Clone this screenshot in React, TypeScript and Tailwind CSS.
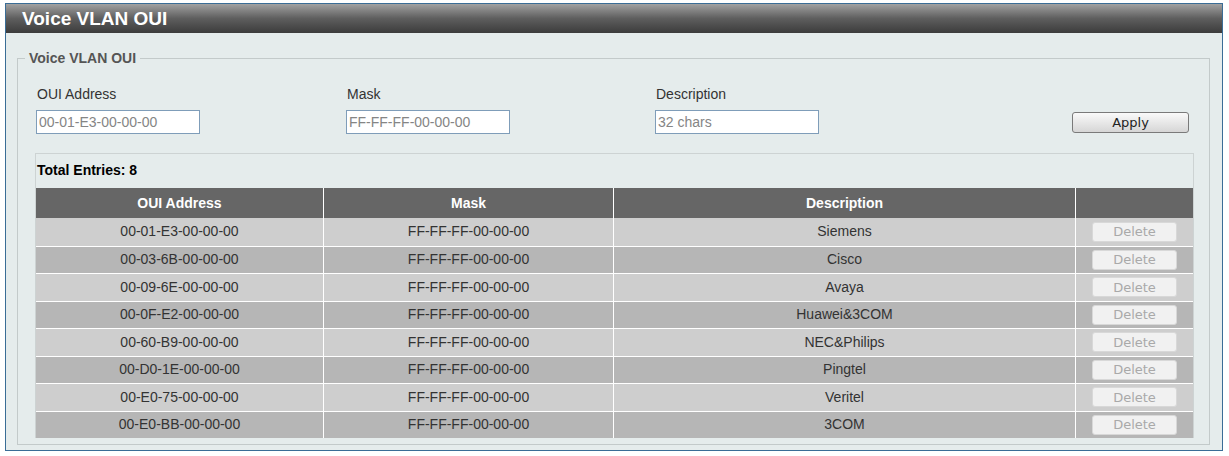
import React from "react";

const entries = [
  { oui: "00-01-E3-00-00-00", desc: "Siemens" },
  { oui: "00-03-6B-00-00-00", desc: "Cisco" },
  { oui: "00-09-6E-00-00-00", desc: "Avaya" },
  { oui: "00-0F-E2-00-00-00", desc: "Huawei&3COM" },
  { oui: "00-60-B9-00-00-00", desc: "NEC&Philips" },
  { oui: "00-D0-1E-00-00-00", desc: "Pingtel" },
  { oui: "00-E0-75-00-00-00", desc: "Veritel" },
  { oui: "00-E0-BB-00-00-00", desc: "3COM" },
];

function Field({ label, value, width }: { label: string; value: string; width: string }) {
  return (
    <div className={`${width} flex flex-col`}>
      <span className="ml-[1px] text-[14px] leading-[16px] text-[#333]">{label}</span>
      <input
        readOnly
        defaultValue={value}
        className="mt-[8px] h-[24px] w-[164px] border border-[#7f9db9] bg-white px-[2px] text-[14px] text-[#858585] outline-none [font-family:'Liberation_Sans',Arial,sans-serif]"
      />
    </div>
  );
}

export default function App() {
  return (
    <div className="h-[456px] w-[1229px] bg-white pl-[5px] pt-[3px] [font-family:'Liberation_Sans',Arial,sans-serif]">
      <div className="flex h-[448px] w-[1218px] flex-col border border-[#3a6d96] bg-[#e5ecec]">
        {/* title bar */}
        <div className="flex h-[29px] items-center bg-gradient-to-b from-[#a2a2a2] via-[#5e5e5e] to-[#3c3c3c] pl-[16px]">
          <span className="text-[19px] font-bold leading-none text-white">Voice VLAN OUI</span>
        </div>

        <fieldset className="ml-[11px] mr-[12px] mt-[17px] border border-[#c3caca] pb-[6px]">
          <legend className="ml-[7px] px-[4px] text-[14px] font-bold leading-[16px] text-[#555]">
            Voice VLAN OUI
          </legend>

          <div className="pl-[17px] pr-[15px]">
            <div className="mt-[20px] flex items-end pl-[1px]">
              <Field label="OUI Address" value="00-01-E3-00-00-00" width="w-[310px]" />
              <Field label="Mask" value="FF-FF-FF-00-00-00" width="w-[309px]" />
              <Field label="Description" value="32 chars" width="w-[309px]" />
              <button className="mb-[1px] ml-auto mr-[5px] h-[21px] w-[117px] rounded-[3px] border border-[#7a7a7a] bg-gradient-to-b from-[#fafafa] to-[#d6d6d6] text-[13px] text-[#222] [font-family:'DejaVu_Sans',Verdana,sans-serif]">
                Apply
              </button>
            </div>

            <div className="mt-[19px] border-x border-t border-[#cdd3d3]">
              <div className="pb-[10px] pl-[1px] pt-[8px] text-[14px] font-bold leading-[16px] text-black">
                Total Entries: 8
              </div>
              <div className="grid grid-cols-[288px_290px_462px_117px] text-[14px]">
                <div className="flex h-[30px] items-center justify-center border-r border-white bg-[#666] font-bold text-white">
                  OUI Address
                </div>
                <div className="flex h-[30px] items-center justify-center border-r border-white bg-[#666] font-bold text-white">
                  Mask
                </div>
                <div className="flex h-[30px] items-center justify-center border-r border-white bg-[#666] font-bold text-white">
                  Description
                </div>
                <div className="h-[30px] bg-[#666]" />
                {entries.map((e, i) => {
                  const bg = i % 2 === 0 ? "bg-[#cecece]" : "bg-[#b6b6b6]";
                  const top = i === 0 ? "" : "border-t border-t-white";
                  return (
                    <React.Fragment key={e.oui}>
                      <div className={`flex h-[27.5px] items-center justify-center border-r border-r-white text-[#333] ${top} ${bg}`}>
                        {e.oui}
                      </div>
                      <div className={`flex h-[27.5px] items-center justify-center border-r border-r-white text-[#333] ${top} ${bg}`}>
                        FF-FF-FF-00-00-00
                      </div>
                      <div className={`flex h-[27.5px] items-center justify-center border-r border-r-white text-[#333] ${top} ${bg}`}>
                        {e.desc}
                      </div>
                      <div className={`flex h-[27.5px] items-center justify-center ${top} ${bg}`}>
                        <button className="h-[20px] w-[85px] rounded-[3px] border border-[#d8d8d8] bg-[#f1f1f1] text-[13px] leading-none text-[#a9a9a9] [font-family:'DejaVu_Sans',Verdana,sans-serif]">
                          Delete
                        </button>
                      </div>
                    </React.Fragment>
                  );
                })}
              </div>
            </div>
          </div>
        </fieldset>
      </div>
    </div>
  );
}
